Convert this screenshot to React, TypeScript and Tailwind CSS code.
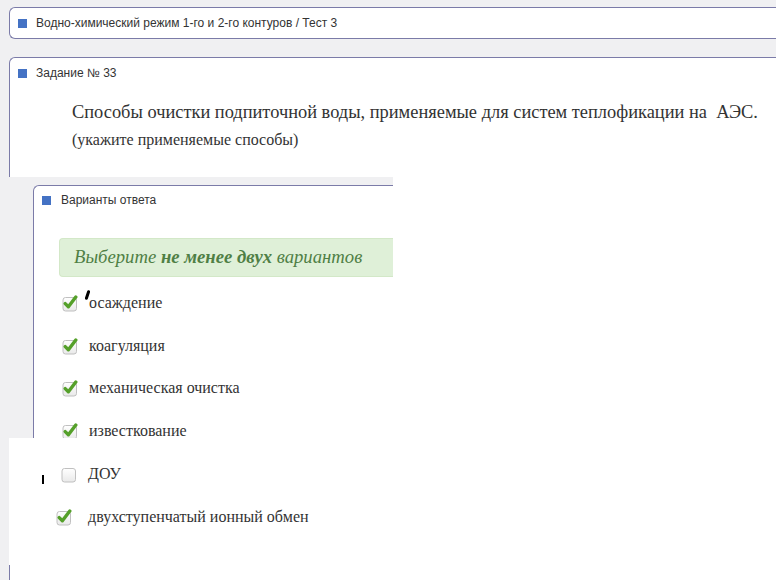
import React from 'react'

const sans = { fontFamily: '"Liberation Sans", Arial, sans-serif' }
const serif = { fontFamily: '"Liberation Serif", "Times New Roman", serif' }

function Marker() {
  return <span className="inline-block h-[9px] w-[9px] shrink-0 bg-[#4472c4]" />
}

function Check({ checked }: { checked: boolean }) {
  return (
    <svg width="16" height="18" viewBox="0 0 16 18" className="shrink-0">
      <defs>
        <linearGradient id="boxfill" x1="0" y1="0" x2="0" y2="1">
          <stop offset="0" stopColor="#ffffff" />
          <stop offset="1" stopColor="#e9e9e9" />
        </linearGradient>
      </defs>
      <rect x="1" y="3.5" width="13.5" height="13.5" rx="2.5" fill="url(#boxfill)" stroke="#c0c0c0" />
      {checked && (
        <path
          d="M3.2 9.6 L6.4 12.8 L13.8 3"
          fill="none"
          stroke="#55a02a"
          strokeWidth="3.4"
          strokeLinecap="round"
          strokeLinejoin="round"
        />
      )}
    </svg>
  )
}

function Option({ label, checked, gap = 'gap-[11px]' }: { label: string; checked: boolean; gap?: string }) {
  return (
    <div className={`flex h-[42.5px] items-center ${gap}`}>
      <Check checked={checked} />
      <span className="text-[16px] whitespace-nowrap text-[#333]" style={serif}>
        {label}
      </span>
    </div>
  )
}

export default function App() {
  return (
    <div className="relative flex h-[580px] w-[776px] flex-col overflow-hidden bg-[#f0f0f2]">
      {/* breadcrumb */}
      <div
        className="ml-[9px] mt-[7px] flex h-[32px] shrink-0 items-center gap-[9px] rounded-l-[6px] border border-r-0 border-[#7b7ba8] bg-white pl-[8px] text-[12px] text-[#333]"
        style={sans}
      >
        <Marker />
        <span>Водно-химический режим 1-го и 2-го контуров / Тест 3</span>
      </div>

      {/* task */}
      <div className="ml-[9px] mt-[18px] h-[120px] shrink-0 rounded-tl-[6px] border-l border-t border-[#7b7ba8] bg-white">
        <div className="flex h-[30px] items-center gap-[9px] pl-[8px] text-[12px] text-[#333]" style={sans}>
          <Marker />
          <span>Задание № 33</span>
        </div>
        <div className="pl-[62px] text-[#333]" style={serif}>
          <p className="mt-[13px] text-[18.4px] leading-[23px] whitespace-pre">
            Способы очистки подпиточной воды, применяемые для систем теплофикации на  АЭС.
          </p>
          <p className="mt-[5px] text-[16px] leading-[21px]">(укажите применяемые способы)</p>
        </div>
      </div>

      {/* answers */}
      <div className="flex h-[261px] shrink-0 overflow-hidden">
        <div className="w-[393px] shrink-0 pl-[33px] pt-[8px]">
          <div className="relative h-full rounded-tl-[6px] border-l border-t border-[#7b7ba8] bg-white">
            <div className="flex h-[28px] items-center gap-[10px] pl-[8px] text-[12px] text-[#333]" style={sans}>
              <Marker />
              <span>Варианты ответа</span>
            </div>
            <div
              className="ml-[25px] mt-[24px] flex h-[39px] items-center overflow-hidden rounded-l-[4px] border border-r-0 border-[#d3e8c8] bg-[#dff0d8] pl-[14px] text-[18.7px] italic whitespace-nowrap text-[#4f7f45]"
              style={serif}
            >
              <span>
                Выберите <b>не менее двух</b> вариантов
              </span>
            </div>
            <div className="mt-[5px] pl-[28px]">
              <Option label="осаждение" checked />
              <Option label="коагуляция" checked />
              <Option label="механическая очистка" checked />
              <Option label="известкование" checked />
            </div>
            <span className="absolute left-[52px] top-[104px] h-[10px] w-[3px] rotate-[18deg] rounded-full bg-black" />
          </div>
        </div>
        <div className="flex-1 bg-white" />
      </div>

      {/* lower sheet */}
      <div className="relative ml-[9px] flex flex-1 flex-col bg-white">
        <div className="pl-[52px] pt-[15px]">
          <Option label="ДОУ" checked={false} />
        </div>
        <div className="pl-[47px]">
          <Option label="двухступенчатый ионный обмен" checked gap="gap-[16px]" />
        </div>
        <div className="mt-auto h-[15px] border-l border-[#7b7ba8]" />
        <span className="absolute left-[33px] top-[37px] h-[9px] w-[2px] bg-black" />
      </div>
    </div>
  )
}
